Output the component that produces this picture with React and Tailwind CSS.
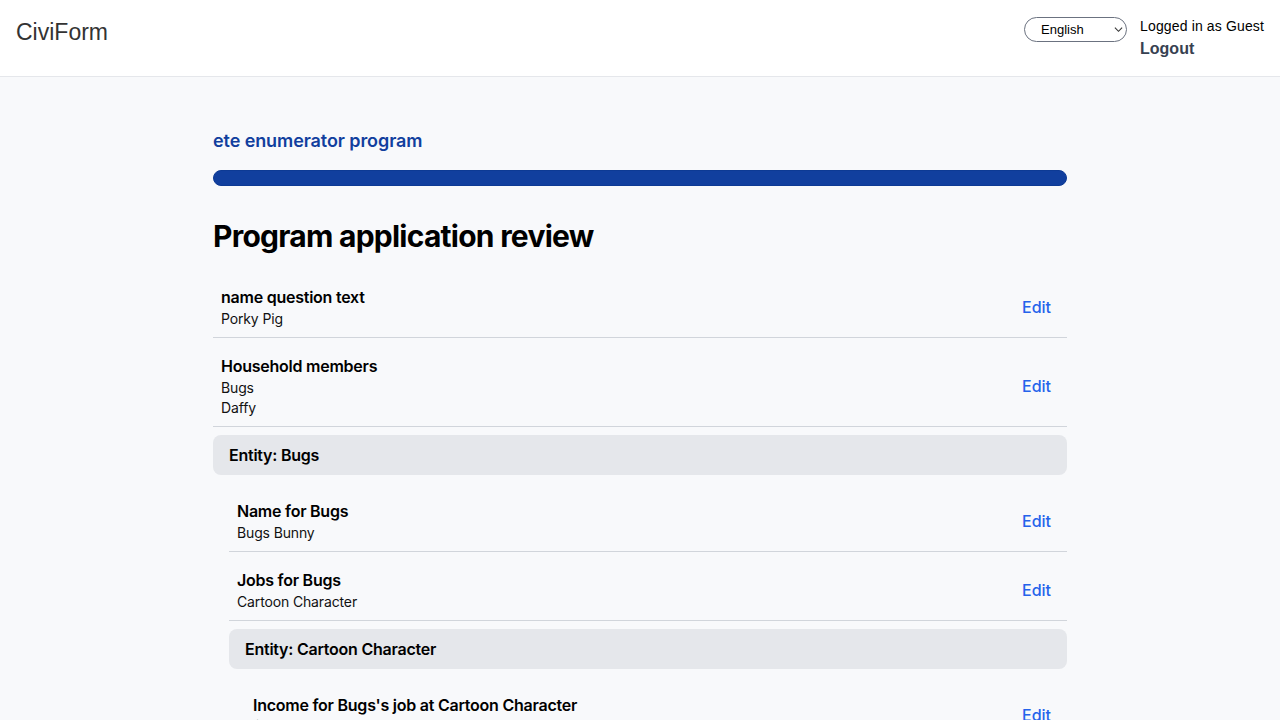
import React from 'react';

const Row = ({ title, answers }) => (
  <div className="flex items-center justify-between border-b border-[#d1d5db] pl-2 pr-4 pt-4 pb-2">
    <div>
      <div className="text-base font-semibold leading-6 tracking-[-0.015em] text-black">{title}</div>
      {answers.map((a) => (
        <div key={a} className="text-sm leading-5 tracking-[-0.01em] text-[#111]">{a}</div>
      ))}
    </div>
    <a href="#" className="text-base font-medium text-[#2563eb]">Edit</a>
  </div>
);

const Entity = ({ label }) => (
  <div className="my-2 rounded-lg bg-[#e5e7eb] px-4 py-2 text-base font-semibold leading-6 tracking-[-0.015em] text-black">
    Entity: {label}
  </div>
);

function App() {
  return (
    <div className="min-h-screen bg-[#f8f9fb]" style={{ fontFamily: 'Inter, "Noto Sans", sans-serif' }}>
      <header
        className="flex h-[77px] items-start justify-between border-b border-[#e5e7eb] bg-white px-4"
        style={{ fontFamily: '"Liberation Sans", Arial, sans-serif' }}
      >
        <div className="pt-[18px] text-[23px] leading-7 text-[#333]">CiviForm</div>
        <div className="flex items-start gap-[13px] pt-[16px]">
          <div className="relative mt-[1px]">
            <select className="h-[25px] w-[103px] appearance-none rounded-full border border-[#6b7280] bg-white pl-4 text-[13px] text-black">
              <option>English</option>
            </select>
            <svg
              className="pointer-events-none absolute right-[4px] top-[8px]"
              width="9"
              height="9"
              viewBox="0 0 10 10"
              fill="none"
              stroke="#333"
              strokeWidth="1.2"
            >
              <path d="M1 3l4 4 4-4" />
            </svg>
          </div>
          <div>
            <div className="text-sm leading-5 tracking-[0.01em] text-black">Logged in as Guest</div>
            <a href="#" className="mt-[1px] block text-base font-bold leading-6 text-[#374151]">Logout</a>
          </div>
        </div>
      </header>

      <main className="mx-auto w-[854px] pt-[50px]">
        <div className="text-lg font-semibold leading-7 tracking-[-0.005em] text-[#113f9e]">ete enumerator program</div>
        <div className="mt-[15px] h-4 rounded-full border border-[#0d3a94] bg-[#113f9e]" />
        <h1 className="mt-8 mb-[15px] text-[30px] font-bold leading-9 tracking-[-0.025em] text-black">Program application review</h1>

        <Row title="name question text" answers={['Porky Pig']} />
        <Row title="Household members" answers={['Bugs', 'Daffy']} />
        <Entity label="Bugs" />
        <div className="ml-4">
          <Row title="Name for Bugs" answers={['Bugs Bunny']} />
          <Row title="Jobs for Bugs" answers={['Cartoon Character']} />
          <Entity label="Cartoon Character" />
          <div className="ml-4">
            <Row title="Income for Bugs's job at Cartoon Character" answers={['$1,000.00']} />
          </div>
        </div>
        <Row title="Name for Daffy" answers={['Daffy Duck']} />
      </main>
    </div>
  );
}

export default App;
